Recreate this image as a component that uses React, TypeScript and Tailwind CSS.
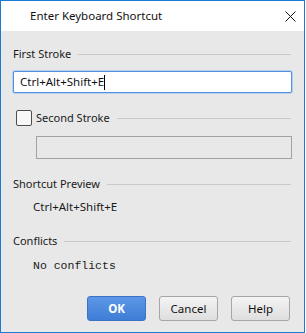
import React from 'react';

const font = { fontFamily: '"Noto Sans", "Open Sans", Arial, sans-serif' };

function SectionHeader({ label }: { label: string }) {
  return (
    <div className="flex h-[16px] items-center">
      <span className="text-[11px] leading-[16px] text-[#1a1a1a]">{label}</span>
      <div className="ml-[7px] mr-[1px] h-px flex-1 bg-[#c9c9c9]" />
    </div>
  );
}

export default function App() {
  return (
    <div className="h-[333px] w-[306px] bg-white" style={font}>
      <div className="flex h-[333px] w-[305px] flex-col border border-[#1a7bd4] bg-[#e8e8e8]">
        {/* Title bar */}
        <div className="flex h-[30px] items-center bg-white">
          <span className="ml-[29px] text-[11.5px] text-[#111]">Enter Keyboard Shortcut</span>
          <svg className="ml-auto mr-[8px]" width="11" height="11" viewBox="0 0 11 11">
            <path d="M0.5 0.5 L10.5 10.5 M10.5 0.5 L0.5 10.5" stroke="#111" strokeWidth="1" />
          </svg>
        </div>

        <div className="flex flex-1 flex-col px-[12px] pt-[15px]">
          <SectionHeader label="First Stroke" />

          <div className="mt-[9px] flex h-[22px] items-center rounded-[2px] border border-[#5690dc] bg-white pl-[6px] shadow-[0_0_0_1px_#b5d0f2]">
            <span className="text-[11.5px] text-[#111]">Ctrl+Alt+Shift+E</span>
            <span className="h-[15px] w-px bg-black" />
          </div>

          <div className="mt-[17px] flex h-[16px] items-center">
            <div className="ml-[3px] h-[16px] w-[16px] rounded-[2px] border border-[#4d4d4d] bg-[#f7f7f7]" />
            <span className="ml-[4px] text-[11px] leading-[16px] text-[#1a1a1a]">Second Stroke</span>
            <div className="ml-[7px] mr-[1px] h-px flex-1 bg-[#c9c9c9]" />
          </div>

          <div className="ml-[23px] mt-[10px] h-[23px] border border-[#a3a3a3] bg-[#e8e8e8]" />

          <div className="mt-[17px]">
            <SectionHeader label="Shortcut Preview" />
          </div>
          <div className="ml-[20px] mt-[7px] text-[11.5px] leading-[16px] text-[#1a1a1a]">Ctrl+Alt+Shift+E</div>

          <div className="mt-[18px]">
            <SectionHeader label="Conflicts" />
          </div>
          <div
            className="ml-[20px] mt-[9px] text-[11.5px] leading-[16px] text-[#1a1a1a]"
            style={{ fontFamily: '"Liberation Mono", "Courier New", monospace' }}
          >
            No conflicts
          </div>

          <div className="mr-[2px] mt-[22px] flex justify-end gap-[13px]">
            <button className="h-[25px] w-[59px] rounded-[3px] border border-[#3c72c4] bg-gradient-to-b from-[#5c98e6] to-[#3f7dd7] text-[11.5px] font-bold text-white">
              OK
            </button>
            <button className="h-[25px] w-[59px] rounded-[3px] border border-[#a6a6a6] bg-gradient-to-b from-[#f4f4f4] to-[#dedede] text-[11.5px] text-[#111]">
              Cancel
            </button>
            <button className="h-[25px] w-[59px] rounded-[3px] border border-[#a6a6a6] bg-gradient-to-b from-[#f4f4f4] to-[#dedede] text-[11.5px] text-[#111]">
              Help
            </button>
          </div>
        </div>
      </div>
    </div>
  );
}
